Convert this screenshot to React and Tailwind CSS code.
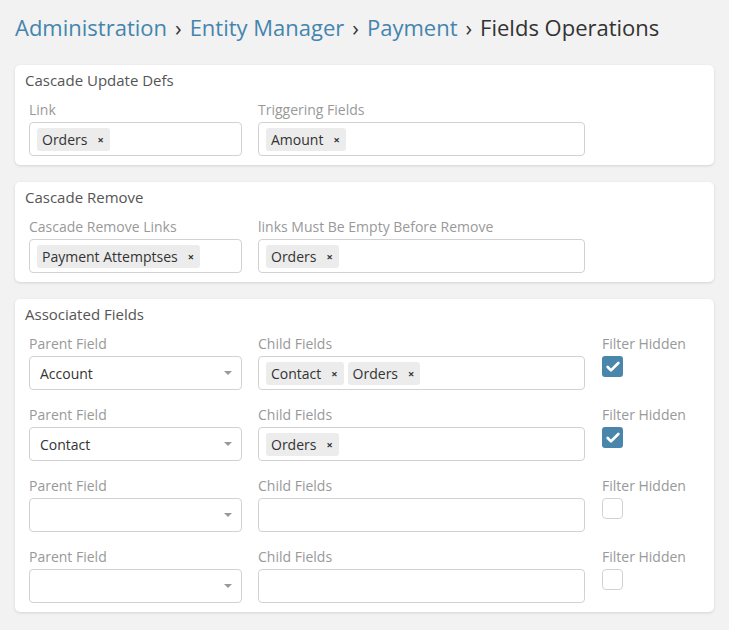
import { Check } from 'lucide-react'

function Tag({ label }) {
  return (
    <span className="inline-flex items-center h-[23px] pl-[5px] pr-[6px] rounded-[3px] bg-[#ececec] text-[#333] text-[14px] leading-[23px]">
      {label}
      <span className="ml-[10px] text-[11px] font-bold leading-none text-[#333]">×</span>
    </span>
  )
}

function MultiInput({ tags = [] }) {
  return (
    <div className="h-[34px] w-full rounded-[4px] border border-[#d2d2d2] bg-white flex items-center gap-[4px] pl-[7px]">
      {tags.map((t) => (
        <Tag key={t} label={t} />
      ))}
    </div>
  )
}

function Select({ value }) {
  return (
    <div className="h-[34px] w-full rounded-[4px] border border-[#d2d2d2] bg-white flex items-center justify-between pl-[10px] pr-[9px] text-[14px] text-[#333]">
      <span>{value}</span>
      <span className="w-0 h-0 border-l-[4px] border-r-[4px] border-t-[4px] border-l-transparent border-r-transparent border-t-[#999]" />
    </div>
  )
}

function Field({ label, children, className }) {
  return (
    <div className={className}>
      <div className="h-[20px] leading-[20px] mb-[2px] text-[14px] text-[#999]">{label}</div>
      {children}
    </div>
  )
}

function Checkbox({ checked }) {
  return checked ? (
    <div className="w-[21px] h-[21px] rounded-[3px] bg-[#4a86ab] flex items-center justify-center">
      <Check className="w-[16px] h-[16px] text-white" strokeWidth={4} />
    </div>
  ) : (
    <div className="w-[21px] h-[21px] rounded-[4px] border border-[#d2d2d2] bg-white" />
  )
}

function Panel({ title, children }) {
  return (
    <div className="bg-white rounded-[5px] shadow-[0_1px_3px_rgba(0,0,0,0.13)] pt-[5px] pb-[9px]">
      <div className="h-[20px] leading-[20px] pl-[10px] text-[15px] text-[#555]">{title}</div>
      <div className="mt-[10px] pl-[14px] flex flex-col gap-[15px]">{children}</div>
    </div>
  )
}

const Sep = () => <span className="px-[8px] text-[#333]">›</span>

const assoc = [
  { parent: 'Account', children: ['Contact', 'Orders'], checked: true },
  { parent: 'Contact', children: ['Orders'], checked: true },
  { parent: '', children: [], checked: false },
  { parent: '', children: [], checked: false },
]

export default function App() {
  return (
    <div className="min-h-[630px] bg-[#f2f2f2] px-[15px] pt-[12px] pb-[18px] font-['Open_Sans',sans-serif]">
      <h1 className="text-[22px] leading-[30px] text-[#333] whitespace-nowrap">
        <span className="text-[#4485ae]">Administration</span>
        <Sep />
        <span className="text-[#4485ae]">Entity Manager</span>
        <Sep />
        <span className="text-[#4485ae]">Payment</span>
        <Sep />
        <span>Fields Operations</span>
      </h1>

      <div className="mt-[23px] flex flex-col gap-[17px]">
        <Panel title="Cascade Update Defs">
          <div className="flex">
            <Field label="Link" className="w-[213px] mr-[16px]">
              <MultiInput tags={['Orders']} />
            </Field>
            <Field label="Triggering Fields" className="w-[327px]">
              <MultiInput tags={['Amount']} />
            </Field>
          </div>
        </Panel>

        <Panel title="Cascade Remove">
          <div className="flex">
            <Field label="Cascade Remove Links" className="w-[213px] mr-[16px]">
              <MultiInput tags={['Payment Attemptses']} />
            </Field>
            <Field label="links Must Be Empty Before Remove" className="w-[327px]">
              <MultiInput tags={['Orders']} />
            </Field>
          </div>
        </Panel>

        <Panel title="Associated Fields">
          {assoc.map((row, i) => (
            <div key={i} className="flex">
              <Field label="Parent Field" className="w-[213px] mr-[16px]">
                <Select value={row.parent} />
              </Field>
              <Field label="Child Fields" className="w-[327px] mr-[17px]">
                <MultiInput tags={row.children} />
              </Field>
              <Field label="Filter Hidden">
                <Checkbox checked={row.checked} />
              </Field>
            </div>
          ))}
        </Panel>
      </div>
    </div>
  )
}
